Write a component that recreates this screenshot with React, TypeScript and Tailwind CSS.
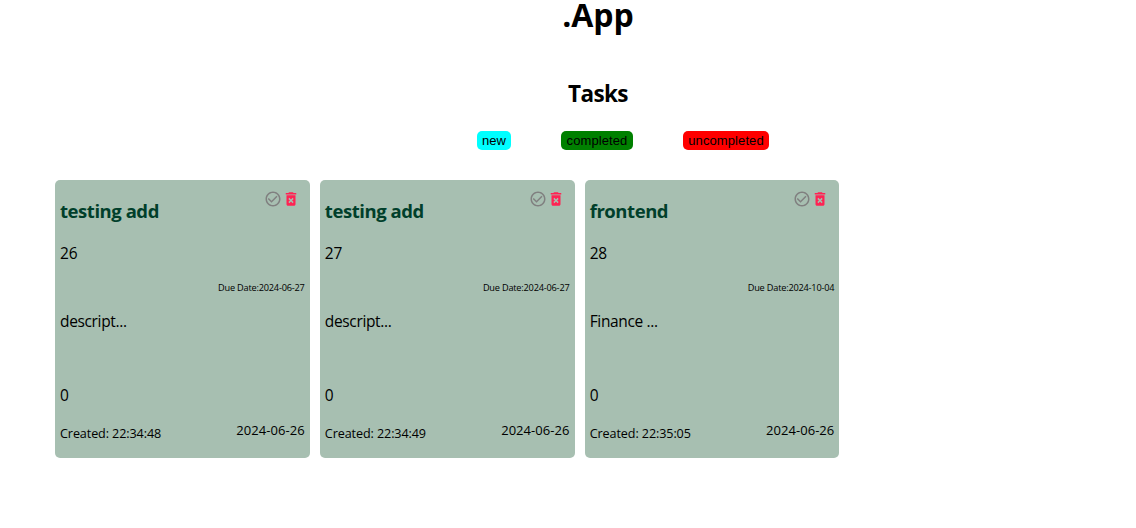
import { MdCheckCircleOutline, MdDeleteForever } from "react-icons/md";

interface Task {
  id: number;
  title: string;
  due: string;
  description: string;
  time: string;
  date: string;
}

const tasks: Task[] = [
  { id: 26, title: "testing add", due: "2024-06-27", description: "descript...", time: "22:34:48", date: "2024-06-26" },
  { id: 27, title: "testing add", due: "2024-06-27", description: "descript...", time: "22:34:49", date: "2024-06-26" },
  { id: 28, title: "frontend", due: "2024-10-04", description: "Finance ...", time: "22:35:05", date: "2024-06-26" },
];

function TaskCard({ task }: { task: Task }) {
  return (
    <article className="flex h-[278px] w-[254.67px] flex-col rounded-[5px] bg-[#a7bfb1] px-[5px] pt-[10px]">
      <div className="flex h-[18px] justify-end pr-[5px] text-[18px]">
        <MdCheckCircleOutline className="text-[#808080]" />
        <MdDeleteForever className="text-[#ff2353]" />
      </div>
      <h3 className="mt-[-9px] text-[18.5px] leading-[24px] font-bold tracking-[-0.45px] text-[#013f2b]">{task.title}</h3>
      <p className="mt-[20px] text-[15.5px] leading-[20px] tracking-[-0.2px]">{task.id}</p>
      <p className="mt-[19px] text-right text-[9.2px] leading-[12px] tracking-[-0.2px]">Due Date:{task.due}</p>
      <p className="mt-[17px] text-[15.5px] leading-[20px] tracking-[-0.35px]">{task.description}</p>
      <p className="mt-[54px] text-[15.5px] leading-[20px]">0</p>
      <div className="mt-[15px] flex justify-between leading-[20px]">
        <span className="pt-[4px] text-[12.6px] tracking-[-0.1px]">Created: {task.time}</span>
        <span className="text-[13px] tracking-[0.05px]">{task.date}</span>
      </div>
    </article>
  );
}

export default function App() {
  return (
    <main className="h-[528px] bg-white font-['Open_Sans','Noto_Sans',sans-serif] text-black">
      <h1 className="pl-[60px] text-center text-[32px] leading-[30px] font-bold">.App</h1>
      <h2 className="mt-[48px] pl-[60px] text-center text-[22.5px] leading-[32px] font-bold tracking-[-0.6px]">Tasks</h2>
      <nav className="mt-[21px] ml-[477px] flex gap-[50px] font-['Liberation_Sans',Arial,sans-serif] text-[13px] leading-[19px]">
        <button className="h-[19px] w-[34px] rounded-[5px] bg-[#00ffff]">new</button>
        <button className="h-[19px] w-[72px] rounded-[5px] bg-[#008000] tracking-[0.1px]">completed</button>
        <button className="h-[19px] w-[86px] rounded-[5px] bg-[#ff0000] tracking-[0.1px]">uncompleted</button>
      </nav>
      <section className="mt-[30px] ml-[55px] flex gap-[10.2px]">
        {tasks.map((task) => (
          <TaskCard key={task.id} task={task} />
        ))}
      </section>
    </main>
  );
}
